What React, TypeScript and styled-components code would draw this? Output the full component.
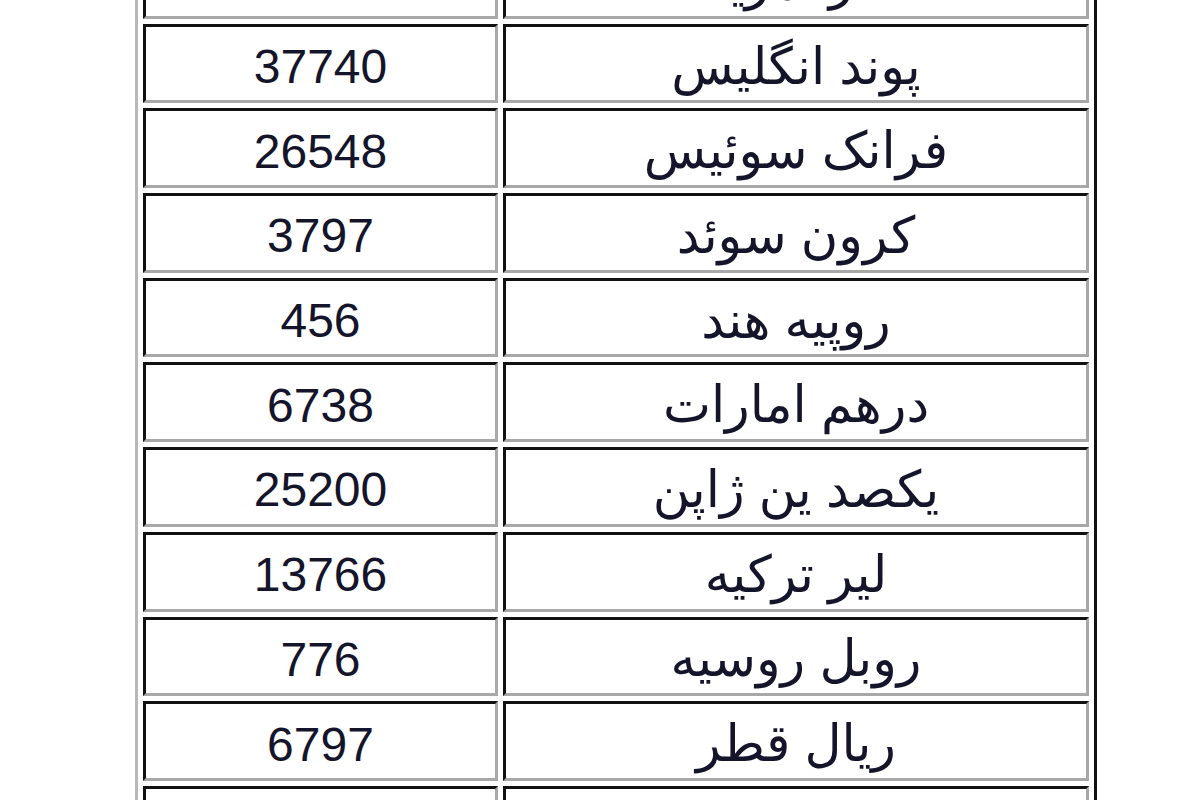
import React from 'react';
import styled, { createGlobalStyle } from 'styled-components';

type rateRow = {
  name: string;
  price: string;
};

// نرخ ارزها (ردیف اول و آخر فقط تکه‌ای دیده می‌شوند)
const rates: rateRow[] = [
  { name: 'دلار آمریکا', price: '28740' },
  { name: 'پوند انگلیس', price: '37740' },
  { name: 'فرانک سوئیس', price: '26548' },
  { name: 'کرون سوئد', price: '3797' },
  { name: 'روپیه هند', price: '456' },
  { name: 'درهم امارات', price: '6738' },
  { name: 'یکصد ین ژاپن', price: '25200' },
  { name: 'لیر ترکیه', price: '13766' },
  { name: 'روبل روسیه', price: '776' },
  { name: 'ریال قطر', price: '6797' },
  { name: 'ریال عربستان', price: '6600' },
];

const GlobalStyle = createGlobalStyle`
  html, body {
    margin: 0;
    padding: 0;
    background: #fff;
    overflow: hidden;
  }
`;

export default function App() {
  return (
    <>
      <GlobalStyle />
      <RateTableWithStyled dir="rtl">
        <tbody>
          {rates.map((r) => (
            <tr key={r.name}>
              <NameCellWithStyled>{r.name}</NameCellWithStyled>
              <PriceCellWithStyled>{r.price}</PriceCellWithStyled>
            </tr>
          ))}
        </tbody>
      </RateTableWithStyled>
    </>
  );
}

const RateTableWithStyled = styled.table`
  margin-top: -69px;
  margin-left: 135px;
  width: 962px;
  border-collapse: separate;
  border-spacing: 5px;
  border-style: solid;
  border-width: 3px;
  border-color: #b8b8b8 #111 #111 #b8b8b8;
  table-layout: fixed;
`;

const CellWithStyled = styled.td`
  height: 66.7px;
  padding: 0;
  text-align: center;
  vertical-align: middle;
  border-style: solid;
  border-width: 3px;
  border-color: #111 #a8a8a8 #a8a8a8 #111;
  color: #14142a;
  font-family: "Liberation Sans", "DejaVu Sans", sans-serif;
  line-height: 1;
`;

const NameCellWithStyled = styled(CellWithStyled)`
  width: 580px;
  padding-top: 5px;
  font-size: 51px;
`;

const PriceCellWithStyled = styled(CellWithStyled)`
  width: 349px;
  padding-top: 7px;
  font-size: 48px;
`;
